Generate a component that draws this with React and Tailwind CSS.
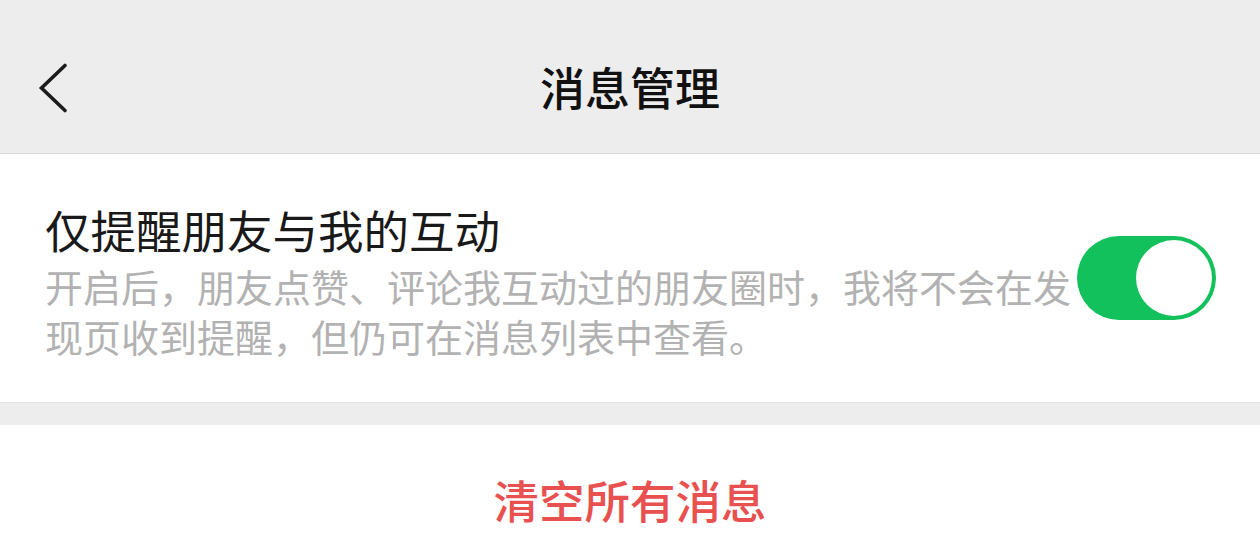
import React from "react";

export default function App() {
  const font = { fontFamily: '"Noto Sans CJK SC", "Noto Sans", sans-serif' };
  return (
    <div className="w-[1260px] h-[560px] bg-[#ededed] overflow-hidden" style={font}>
      <header className="relative h-[154px] flex items-center justify-center pt-[20px] border-b border-[#dcdcdc] bg-[#ededed]">
        <button className="absolute left-[36px] top-[60px] w-[36px] h-[56px] flex items-center justify-center">
          <svg width="36" height="56" viewBox="0 0 36 56" fill="none">
            <path d="M29 5.5 L5.5 28 L29 50.5" stroke="#1c1c1c" strokeWidth="3.6" strokeLinecap="round" strokeLinejoin="miter" />
          </svg>
        </button>
        <h1 className="text-[45px] leading-[56px] font-medium text-[#111111]">消息管理</h1>
      </header>

      <section className="bg-white h-[249px] flex items-center pl-[45px] pr-[44px] border-b border-[#e0e0e0]">
        <div className="flex-1 min-w-0 pt-[6px]">
          <div className="text-[45.5px] leading-[56px] text-[#191919]">仅提醒朋友与我的互动</div>
          <p className="mt-[4px] text-[38px] leading-[50px] text-[#b2b2b2]">
            开启后，朋友点赞、评论我互动过的朋友圈时，我将不会在发现页收到提醒，但仍可在消息列表中查看。
          </p>
        </div>
        <div className="w-[139px] h-[84px] rounded-full bg-[#13c15c] p-[4px] flex justify-end shrink-0">
          <div className="w-[76px] h-[76px] rounded-full bg-white" />
        </div>
      </section>

      <div className="h-[22px]" />

      <section className="bg-white h-[135px] flex items-start justify-center pt-[46px]">
        <span className="text-[45.5px] leading-[56px] font-medium text-[#e8514f]">清空所有消息</span>
      </section>
    </div>
  );
}
